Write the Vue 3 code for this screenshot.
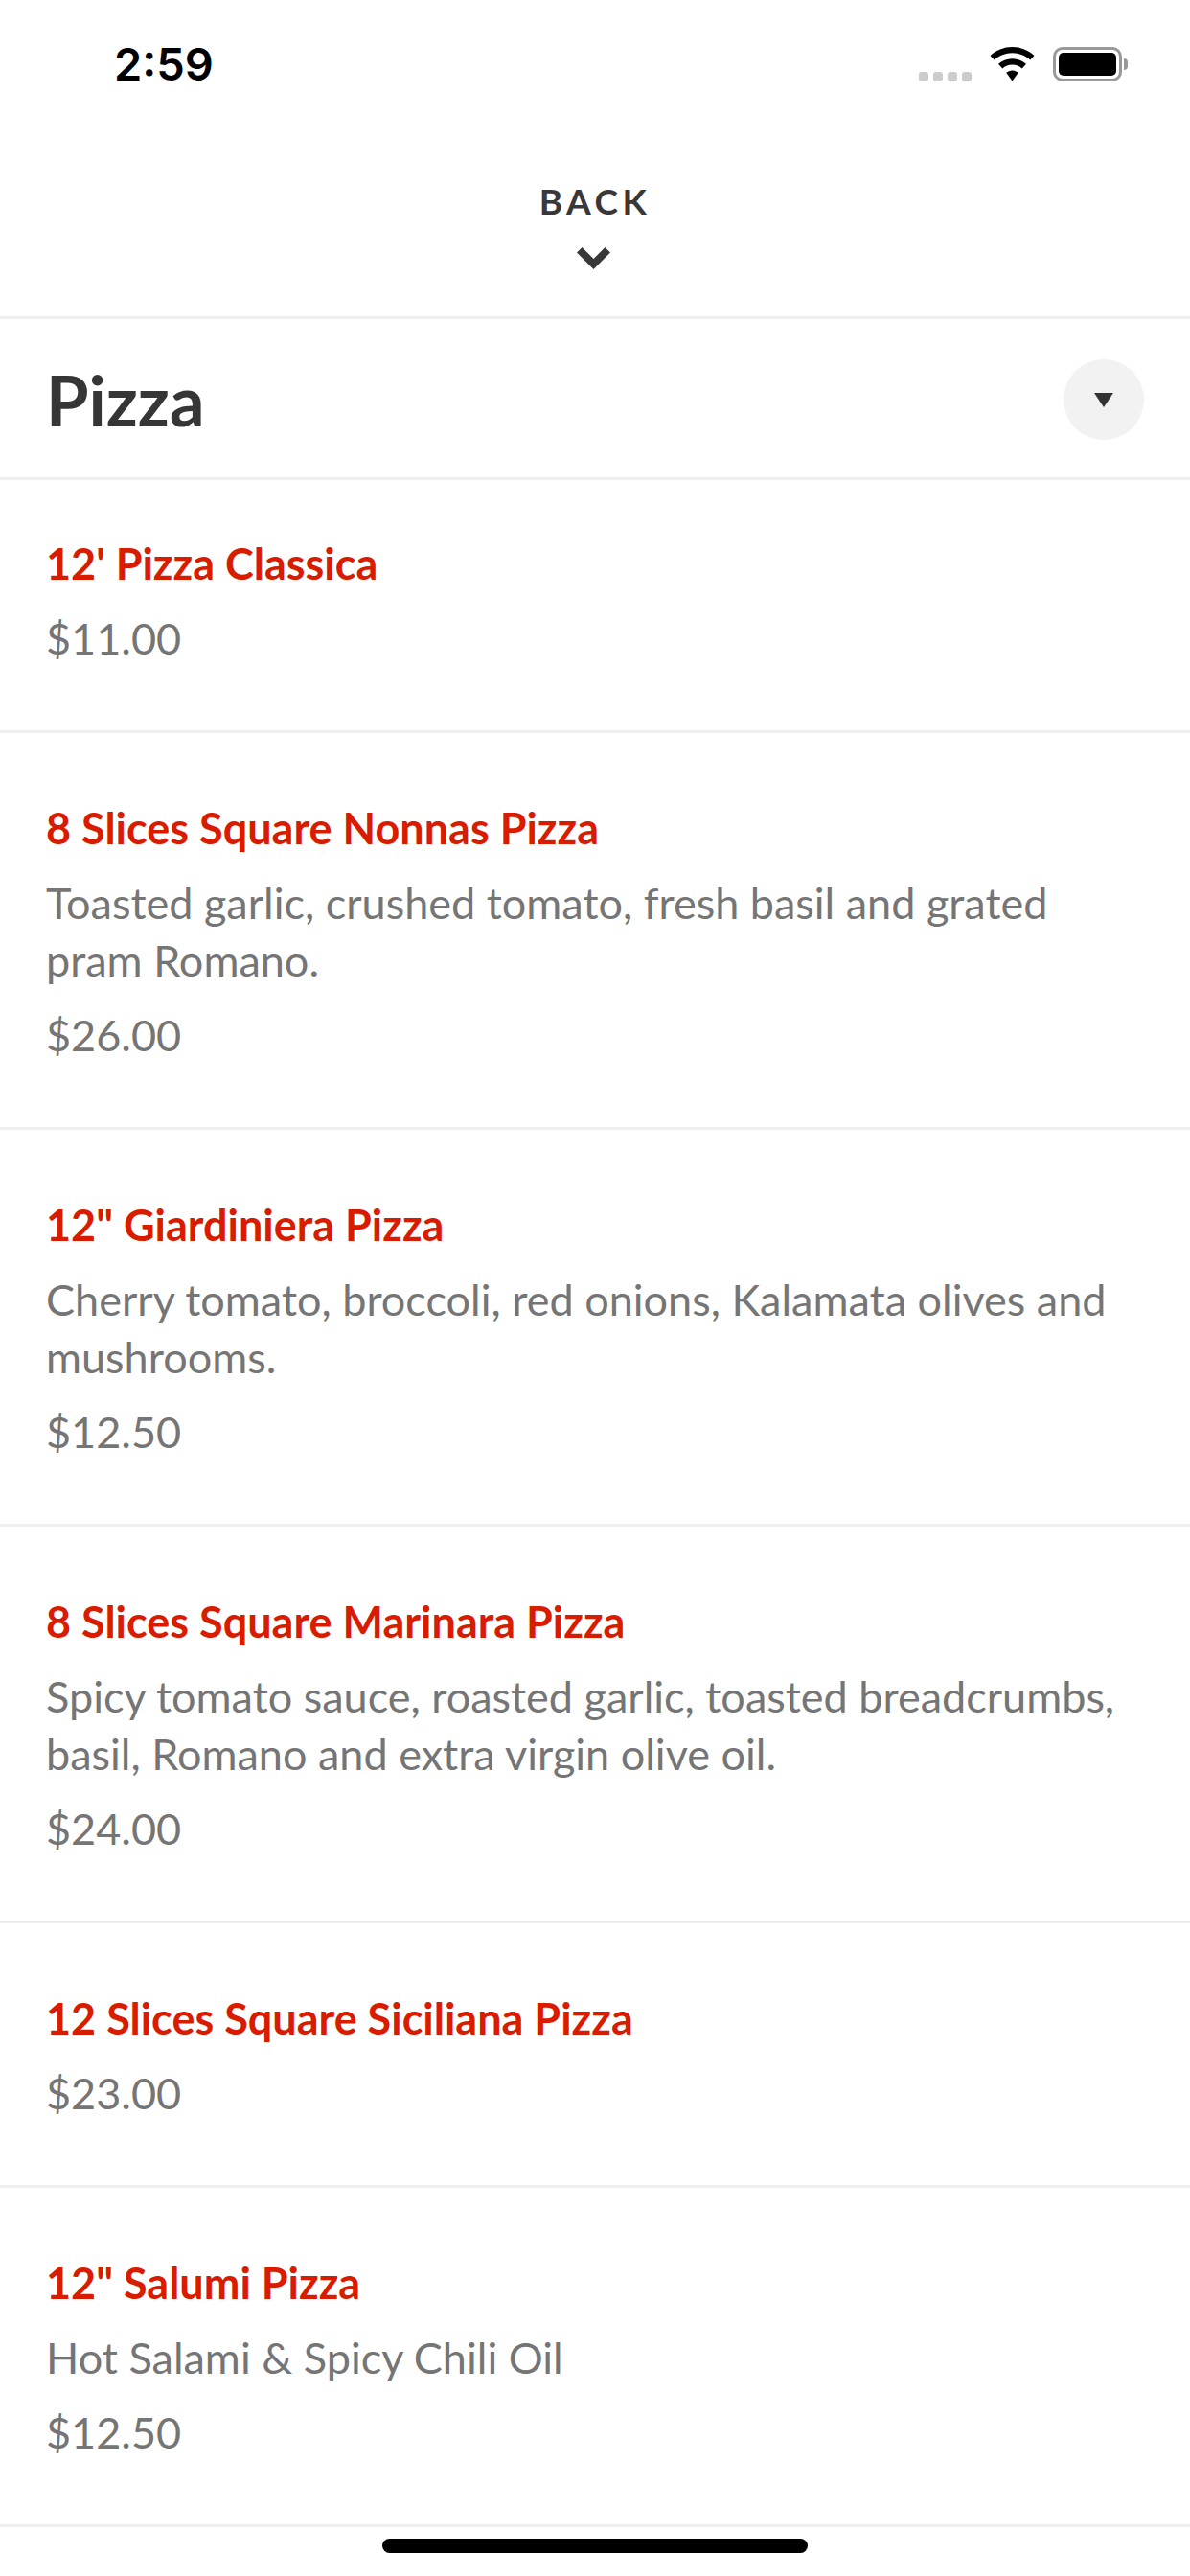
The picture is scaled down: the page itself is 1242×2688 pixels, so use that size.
<script setup>
const items = [
  { name: "12' Pizza Classica", price: '$11.00' },
  { name: '8 Slices Square Nonnas Pizza', desc: 'Toasted garlic, crushed tomato, fresh basil and grated pram Romano.', price: '$26.00' },
  { name: '12" Giardiniera Pizza', desc: 'Cherry tomato, broccoli, red onions, Kalamata olives and mushrooms.', price: '$12.50' },
  { name: '8 Slices Square Marinara Pizza', desc: 'Spicy tomato sauce, roasted garlic, toasted breadcrumbs, basil, Romano and extra virgin olive oil.', price: '$24.00' },
  { name: '12 Slices Square Siciliana Pizza', price: '$23.00' },
  { name: '12" Salumi Pizza', desc: 'Hot Salami & Spicy Chili Oil', price: '$12.50' },
]
</script>

<template>
  <div class="screen">
    <div class="status-bar">
      <span class="time">2:59</span>
      <div class="status-icons">
        <div class="signal">
          <i></i><i></i><i></i><i></i>
        </div>
        <svg class="wifi" width="47" height="36" viewBox="0 0 47 36">
          <path d="M23.5 0C14.6 0 6.6 3.400 0.500 9.100L4.700 13.600C9.700 9 16.300 6.200 23.500 6.200C30.700 6.200 37.300 9 42.300 13.600L46.500 9.100C40.400 3.400 32.400 0 23.500 0Z" />
          <path d="M23.500 12.200C17.900 12.200 12.800 14.300 9 17.800L13.300 22.400C16 19.900 19.600 18.400 23.500 18.400C27.400 18.400 31 19.900 33.700 22.400L38 17.800C34.200 14.300 29.100 12.200 23.500 12.200Z" />
          <path d="M23.500 24.400C21 24.400 18.900 25.300 17.200 26.800L23.500 35.500L29.800 26.800C28.100 25.300 26 24.400 23.500 24.400Z" />
        </svg>
        <div class="battery">
          <div class="battery-body"><div class="battery-fill"></div></div>
          <div class="battery-nub"></div>
        </div>
      </div>
    </div>

    <div class="back">
      <span class="back-label">BACK</span>
      <svg class="chevron" width="35" height="23" viewBox="0 0 35 23">
        <path d="M0 5.500L5.500 0L17.500 12L29.500 0L35 5.500L17.500 23Z" />
      </svg>
    </div>

    <div class="category">
      <h1>Pizza</h1>
      <div class="toggle"><span class="caret"></span></div>
    </div>

    <div class="item" v-for="item in items" :key="item.name">
      <div class="item-name">{{ item.name }}</div>
      <div v-if="item.desc" class="item-desc">{{ item.desc }}</div>
      <div class="item-price">{{ item.price }}</div>
    </div>

    <div class="home"><div class="home-bar"></div></div>
  </div>
</template>

<style>
html, body { margin: 0; background: #fff; }
</style>

<style scoped>
.screen {
  width: 1242px;
  height: 2688px;
  overflow: hidden;
  background: #fff;
  font-family: Lato, "Open Sans", sans-serif;
  display: flex;
  flex-direction: column;
}
.status-bar {
  height: 134px;
  box-sizing: border-box;
  padding: 49px 65px 0 119px;
  display: flex;
  justify-content: space-between;
  align-items: flex-start;
  flex: none;
}
.time {
  font-family: Inter, sans-serif;
  font-weight: 600;
  font-size: 47px;
  line-height: 36px;
  color: #000;
}
.status-icons { display: flex; align-items: flex-end; height: 36px; }
.signal { display: flex; gap: 5px; margin-right: 19px; }
.signal i { width: 10px; height: 10px; border-radius: 3px; background: #ccc; }
.wifi { fill: #000; margin-right: 19px; }
.battery { display: flex; align-items: center; }
.battery-body {
  width: 72px;
  height: 36px;
  box-sizing: border-box;
  border: 3.5px solid #999;
  border-radius: 10px;
  padding: 3px;
}
.battery-fill { height: 100%; background: #000; border-radius: 5px; }
.battery-nub { width: 4px; height: 12px; margin-left: 2px; background: #999; border-radius: 0 4px 4px 0; }

.back {
  height: 199px;
  box-sizing: border-box;
  flex: none;
  display: flex;
  flex-direction: column;
  align-items: center;
  border-bottom: 3px solid #eee;
  padding-top: 54px;
}
.back-label {
  font-weight: 700;
  font-size: 37px;
  line-height: 44px;
  letter-spacing: 4.500px;
  color: #383838;
}
.chevron { fill: #383838; margin-top: 26px; margin-right: 3px; }

.category {
  height: 168px;
  box-sizing: border-box;
  flex: none;
  display: flex;
  justify-content: space-between;
  align-items: center;
  padding: 3px 48px 0 48px;
  border-bottom: 3px solid #eee;
}
h1 {
  margin: 0;
  font-size: 72px;
  line-height: 86px;
  font-weight: 700;
  color: #363636;
}
.toggle {
  width: 84px;
  height: 84px;
  border-radius: 50%;
  background: #f2f2f2;
  display: flex;
  align-items: center;
  justify-content: center;
}
.caret {
  width: 0;
  height: 0;
  border-left: 10.500px solid transparent;
  border-right: 10.500px solid transparent;
  border-top: 15px solid #333;
}

.item {
  flex: none;
  padding: 69px 48px 66px;
  border-bottom: 3px solid #eee;
  display: flex;
  flex-direction: column;
  gap: 18px;
  font-size: 45px;
  line-height: 60px;
}
.item:nth-of-type(4) { padding-top: 57px; }
.item-name { font-weight: 700; color: #d91c00; }
.item-desc, .item-price { color: #757575; }

.home {
  flex: 1;
  display: flex;
  justify-content: center;
  padding-top: 12px;
}
.home-bar { width: 444px; height: 15px; border-radius: 8px; background: #000; }
</style>
